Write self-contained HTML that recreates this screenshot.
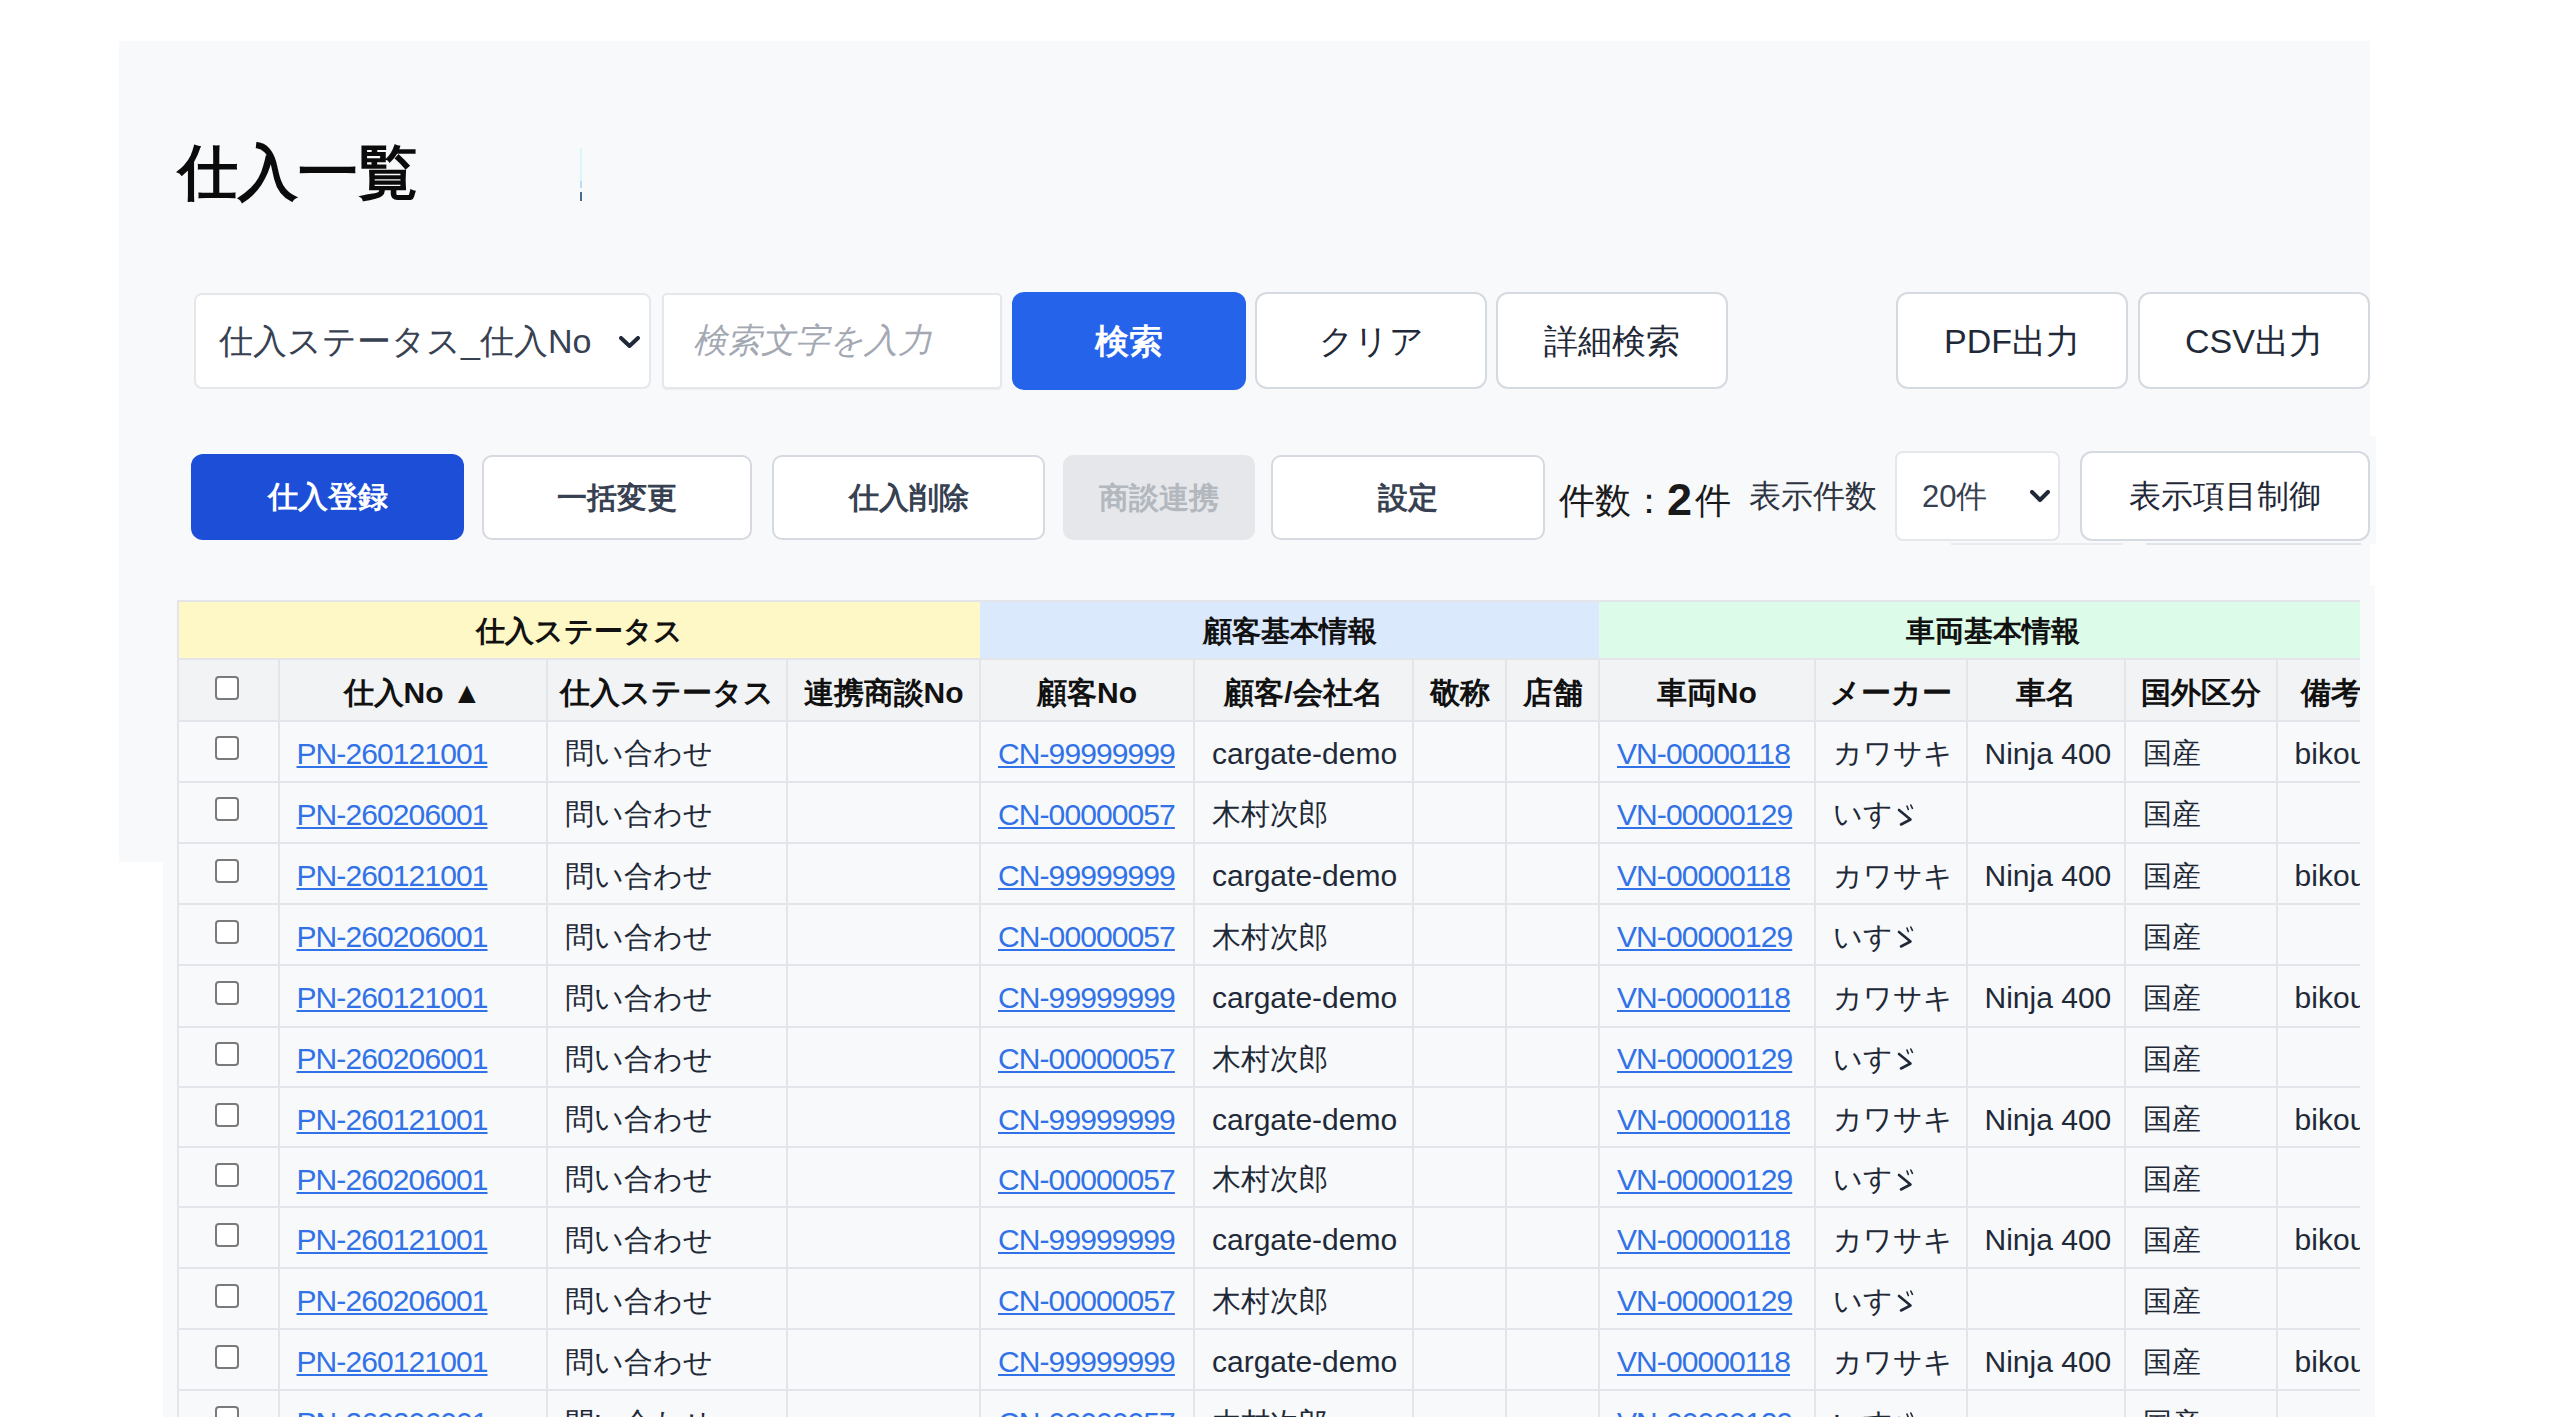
<!DOCTYPE html><html lang="ja"><head><meta charset="utf-8"><title>仕入一覧</title><style>

html,body{margin:0;padding:0;}
body{width:2560px;height:1417px;overflow:hidden;background:#ffffff;position:relative;font-family:'Liberation Sans',sans-serif;color:#1f2937;}
.a{position:absolute;}
.t{position:absolute;white-space:nowrap;line-height:1;}
.btn{position:absolute;box-sizing:border-box;background:#fff;border:2px solid #d8dce3;border-radius:10px;}
.lnk{color:#3172e8;text-decoration:underline;text-decoration-thickness:2px;text-underline-offset:2px;letter-spacing:-0.9px;}
.cb{position:absolute;box-sizing:border-box;width:24px;height:24px;border:2px solid #7a7a7a;border-radius:4px;background:#fff;}
.hl{position:absolute;height:2px;background:#e3e5ea;}
.vl{position:absolute;width:2px;background:#e3e5ea;}
.chev{position:absolute;}

</style></head><body>
<div class="a" style="left:119px;top:41px;width:2251px;height:821px;background:#f8f9fb"></div>
<div class="a" style="left:163px;top:862px;width:2212px;height:555px;background:#f8f9fb"></div>
<div class="a" style="left:2370px;top:436px;width:6px;height:108px;background:#f8f9fb"></div>
<div class="a" style="left:2370px;top:585px;width:5px;height:277px;background:#f8f9fb"></div>
<div class="t" style="left:178px;top:143px;font-size:60px;font-weight:bold;color:#0b0b0b">仕入一覧</div>
<div class="a" style="left:580px;top:148px;width:2px;height:38px;background:#d9f6fa"></div>
<div class="a" style="left:580px;top:181px;width:2px;height:7px;background:#b9dcfb"></div>
<div class="a" style="left:580px;top:192px;width:2px;height:9px;background:#4a6a8a"></div>
<div class="btn" style="left:194px;top:293px;width:457px;height:96px;border:2px solid #e5e7eb;border-radius:8px"></div>
<div class="t" style="left:219px;top:324px;font-size:34px;color:#374151">仕入ステータス_仕入No</div>
<svg class="chev" style="left:619px;top:336px" width="21" height="12" viewBox="0 0 21 12"><polyline points="2.0,2.0 10.5,10.0 19.0,2.0" fill="none" stroke="#1f2937" stroke-width="4" stroke-linecap="round" stroke-linejoin="round"/></svg>
<div class="btn" style="left:662px;top:293px;width:340px;height:96px;border:2px solid #e5e7eb;border-radius:5px;box-shadow:0 1px 2px rgba(0,0,0,0.06)"></div>
<div class="t" style="left:693px;top:323px;font-size:34px;color:#a3a8b3;font-style:italic">検索文字を入力</div>
<div class="btn" style="left:1012px;top:292px;width:234px;height:98px;background:#2563eb;border:none;border-radius:12px;"><div style="position:absolute;left:0;right:0;top:0;bottom:0;display:flex;align-items:center;justify-content:center;font-size:34px;font-weight:bold;color:#ffffff;white-space:nowrap;line-height:1">検索</div></div>
<div class="btn" style="left:1255px;top:292px;width:232px;height:97px;background:#fff;border:2px solid #d5d9e0;border-radius:12px;"><div style="position:absolute;left:0;right:0;top:0;bottom:0;display:flex;align-items:center;justify-content:center;font-size:34px;font-weight:normal;color:#1f2937;white-space:nowrap;line-height:1">クリア</div></div>
<div class="btn" style="left:1496px;top:292px;width:232px;height:97px;background:#fff;border:2px solid #d5d9e0;border-radius:12px;"><div style="position:absolute;left:0;right:0;top:0;bottom:0;display:flex;align-items:center;justify-content:center;font-size:34px;font-weight:normal;color:#1f2937;white-space:nowrap;line-height:1">詳細検索</div></div>
<div class="btn" style="left:1896px;top:292px;width:232px;height:97px;background:#fff;border:2px solid #d5d9e0;border-radius:12px;"><div style="position:absolute;left:0;right:0;top:0;bottom:0;display:flex;align-items:center;justify-content:center;font-size:34px;font-weight:normal;color:#1f2937;white-space:nowrap;line-height:1">PDF出力</div></div>
<div class="btn" style="left:2138px;top:292px;width:232px;height:97px;background:#fff;border:2px solid #d5d9e0;border-radius:12px;"><div style="position:absolute;left:0;right:0;top:0;bottom:0;display:flex;align-items:center;justify-content:center;font-size:34px;font-weight:normal;color:#1f2937;white-space:nowrap;line-height:1">CSV出力</div></div>
<div class="btn" style="left:191px;top:454px;width:273px;height:86px;background:#1d4ed8;border:none;border-radius:12px;"><div style="position:absolute;left:0;right:0;top:0;bottom:0;display:flex;align-items:center;justify-content:center;font-size:30px;font-weight:bold;color:#ffffff;white-space:nowrap;line-height:1">仕入登録</div></div>
<div class="btn" style="left:482px;top:455px;width:270px;height:85px;background:#fff;border:2px solid #d6d9df;border-radius:10px;"><div style="position:absolute;left:0;right:0;top:0;bottom:0;display:flex;align-items:center;justify-content:center;font-size:30px;font-weight:bold;color:#374151;white-space:nowrap;line-height:1">一括変更</div></div>
<div class="btn" style="left:772px;top:455px;width:273px;height:85px;background:#fff;border:2px solid #d6d9df;border-radius:10px;"><div style="position:absolute;left:0;right:0;top:0;bottom:0;display:flex;align-items:center;justify-content:center;font-size:30px;font-weight:bold;color:#374151;white-space:nowrap;line-height:1">仕入削除</div></div>
<div class="btn" style="left:1063px;top:455px;width:192px;height:85px;background:#e5e7eb;border:none;border-radius:10px;"><div style="position:absolute;left:0;right:0;top:0;bottom:0;display:flex;align-items:center;justify-content:center;font-size:30px;font-weight:bold;color:#b3b7be;white-space:nowrap;line-height:1">商談連携</div></div>
<div class="btn" style="left:1271px;top:455px;width:274px;height:85px;background:#fff;border:2px solid #d6d9df;border-radius:10px;"><div style="position:absolute;left:0;right:0;top:0;bottom:0;display:flex;align-items:center;justify-content:center;font-size:30px;font-weight:bold;color:#374151;white-space:nowrap;line-height:1">設定</div></div>
<div class="t" style="left:1559px;top:477px;font-size:36px;color:#1a1a1a">件数：<span style="font-weight:bold;font-size:45px;vertical-align:-2px;margin-right:3px">2</span>件</div>
<div class="t" style="left:1749px;top:480px;font-size:32px;color:#2d3440">表示件数</div>
<div class="btn" style="left:1895px;top:451px;width:165px;height:90px;border:2px solid #e5e7eb;border-radius:8px"></div>
<div class="t" style="left:1922px;top:481px;font-size:31px;color:#374151">20件</div>
<svg class="chev" style="left:2030px;top:490px" width="20" height="12" viewBox="0 0 20 12"><polyline points="2.0,2.0 10.0,10.0 18.0,2.0" fill="none" stroke="#1f2937" stroke-width="4" stroke-linecap="round" stroke-linejoin="round"/></svg>
<div class="btn" style="left:2080px;top:451px;width:290px;height:90px;background:#fff;border:2px solid #d5d9e0;border-radius:12px;"><div style="position:absolute;left:0;right:0;top:0;bottom:0;display:flex;align-items:center;justify-content:center;font-size:32px;font-weight:normal;color:#1f2937;white-space:nowrap;line-height:1">表示項目制御</div></div>
<div class="a" style="left:1951px;top:543px;width:172px;height:2px;background:#e9ebef"></div>
<div class="a" style="left:2146px;top:543px;width:215px;height:2px;background:#e1e4e9"></div>
<div class="a" style="left:177px;top:0;width:2183px;height:1417px;overflow:hidden">
<div class="a" style="left:1px;top:601px;width:802px;height:58.299999999999955px;background:#fef7c6"></div>
<div class="a" style="left:803px;top:601px;width:619px;height:58.299999999999955px;background:#dbe9fd"></div>
<div class="a" style="left:1422px;top:601px;width:787px;height:58.299999999999955px;background:#ddfbe9"></div>
<div class="a" style="left:1px;top:659.3px;width:2208px;height:61.5px;background:#f2f3f5"></div>
<div class="a" style="left:1px;top:720.8px;width:2208px;height:696.2px;background:#f8f9fb"></div>
<div class="a" style="left:1px;top:602.5px;width:802px;height:58.299999999999955px;display:flex;align-items:center;justify-content:center;font-size:29px;font-weight:bold;color:#111111;white-space:nowrap;line-height:1">仕入ステータス</div>
<div class="a" style="left:803px;top:602.5px;width:619px;height:58.299999999999955px;display:flex;align-items:center;justify-content:center;font-size:29px;font-weight:bold;color:#111111;white-space:nowrap;line-height:1">顧客基本情報</div>
<div class="a" style="left:1422px;top:602.5px;width:787px;height:58.299999999999955px;display:flex;align-items:center;justify-content:center;font-size:29px;font-weight:bold;color:#111111;white-space:nowrap;line-height:1">車両基本情報</div>
<div class="cb" style="left:38px;top:676px"></div>
<div class="a" style="left:101.5px;top:661.8px;width:268.20000000000005px;height:61.5px;display:flex;align-items:center;justify-content:center;font-size:30px;font-weight:bold;color:#111111;white-space:nowrap;line-height:1">仕入No ▲</div>
<div class="a" style="left:369.70000000000005px;top:661.8px;width:240.29999999999995px;height:61.5px;display:flex;align-items:center;justify-content:center;font-size:30px;font-weight:bold;color:#111111;white-space:nowrap;line-height:1">仕入ステータス</div>
<div class="a" style="left:610px;top:661.8px;width:193px;height:61.5px;display:flex;align-items:center;justify-content:center;font-size:30px;font-weight:bold;color:#111111;white-space:nowrap;line-height:1">連携商談No</div>
<div class="a" style="left:803px;top:661.8px;width:214px;height:61.5px;display:flex;align-items:center;justify-content:center;font-size:30px;font-weight:bold;color:#111111;white-space:nowrap;line-height:1">顧客No</div>
<div class="a" style="left:1017px;top:661.8px;width:219px;height:61.5px;display:flex;align-items:center;justify-content:center;font-size:30px;font-weight:bold;color:#111111;white-space:nowrap;line-height:1">顧客/会社名</div>
<div class="a" style="left:1236px;top:661.8px;width:93px;height:61.5px;display:flex;align-items:center;justify-content:center;font-size:30px;font-weight:bold;color:#111111;white-space:nowrap;line-height:1">敬称</div>
<div class="a" style="left:1329px;top:661.8px;width:93px;height:61.5px;display:flex;align-items:center;justify-content:center;font-size:30px;font-weight:bold;color:#111111;white-space:nowrap;line-height:1">店舗</div>
<div class="a" style="left:1422px;top:661.8px;width:215.70000000000005px;height:61.5px;display:flex;align-items:center;justify-content:center;font-size:30px;font-weight:bold;color:#111111;white-space:nowrap;line-height:1">車両No</div>
<div class="a" style="left:1637.7px;top:661.8px;width:151.79999999999995px;height:61.5px;display:flex;align-items:center;justify-content:center;font-size:30px;font-weight:bold;color:#111111;white-space:nowrap;line-height:1">メーカー</div>
<div class="a" style="left:1789.5px;top:661.8px;width:158.0px;height:61.5px;display:flex;align-items:center;justify-content:center;font-size:30px;font-weight:bold;color:#111111;white-space:nowrap;line-height:1">車名</div>
<div class="a" style="left:1947.5px;top:661.8px;width:152.0999999999999px;height:61.5px;display:flex;align-items:center;justify-content:center;font-size:30px;font-weight:bold;color:#111111;white-space:nowrap;line-height:1">国外区分</div>
<div class="a" style="left:2099.6px;top:661.8px;width:109.40000000000009px;height:61.5px;display:flex;align-items:center;justify-content:center;font-size:30px;font-weight:bold;color:#111111;white-space:nowrap;line-height:1">備考</div>
<div class="cb" style="left:38px;top:736.3px"></div>
<div class="a lnk" style="left:119.5px;top:723.3px;height:60.90000000000009px;display:flex;align-items:center;font-size:30px;white-space:nowrap;line-height:1">PN-260121001</div>
<div class="a" style="left:387.70000000000005px;top:723.3px;height:60.90000000000009px;display:flex;align-items:center;font-size:29px;white-space:nowrap;line-height:1">問い合わせ</div>
<div class="a lnk" style="left:821px;top:723.3px;height:60.90000000000009px;display:flex;align-items:center;font-size:30px;white-space:nowrap;line-height:1">CN-99999999</div>
<div class="a" style="left:1035px;top:723.3px;height:60.90000000000009px;display:flex;align-items:center;font-size:30px;white-space:nowrap;line-height:1">cargate-demo</div>
<div class="a lnk" style="left:1440px;top:723.3px;height:60.90000000000009px;display:flex;align-items:center;font-size:30px;white-space:nowrap;line-height:1">VN-00000118</div>
<div class="a" style="left:1655.7px;top:723.3px;height:60.90000000000009px;display:flex;align-items:center;font-size:29px;white-space:nowrap;line-height:1">カワサキ</div>
<div class="a" style="left:1807.5px;top:723.3px;height:60.90000000000009px;display:flex;align-items:center;font-size:30px;white-space:nowrap;line-height:1">Ninja 400</div>
<div class="a" style="left:1965.5px;top:723.3px;height:60.90000000000009px;display:flex;align-items:center;font-size:29px;white-space:nowrap;line-height:1">国産</div>
<div class="a" style="left:2117.6px;top:723.3px;height:60.90000000000009px;display:flex;align-items:center;font-size:30px;white-space:nowrap;line-height:1">bikou</div>
<div class="cb" style="left:38px;top:797.2px"></div>
<div class="a lnk" style="left:119.5px;top:784.2px;height:61.299999999999955px;display:flex;align-items:center;font-size:30px;white-space:nowrap;line-height:1">PN-260206001</div>
<div class="a" style="left:387.70000000000005px;top:784.2px;height:61.299999999999955px;display:flex;align-items:center;font-size:29px;white-space:nowrap;line-height:1">問い合わせ</div>
<div class="a lnk" style="left:821px;top:784.2px;height:61.299999999999955px;display:flex;align-items:center;font-size:30px;white-space:nowrap;line-height:1">CN-00000057</div>
<div class="a" style="left:1035px;top:784.2px;height:61.299999999999955px;display:flex;align-items:center;font-size:29px;white-space:nowrap;line-height:1">木村次郎</div>
<div class="a lnk" style="left:1440px;top:784.2px;height:61.299999999999955px;display:flex;align-items:center;font-size:30px;white-space:nowrap;line-height:1">VN-00000129</div>
<div class="a" style="left:1655.7px;top:784.2px;height:61.299999999999955px;display:flex;align-items:center;font-size:29px;white-space:nowrap;line-height:1">いす<svg width="22" height="26" viewBox="0 0 22 26" style="vertical-align:-3px;margin-left:3px"><polyline points="3,8 14.5,17.5 5,22.5" fill="none" stroke="#1f2937" stroke-width="2.6" stroke-linecap="round" stroke-linejoin="round"/><line x1="11" y1="4" x2="12.3" y2="7.5" stroke="#1f2937" stroke-width="1.6" stroke-linecap="round"/><line x1="14.8" y1="3" x2="16.4" y2="6.3" stroke="#1f2937" stroke-width="1.6" stroke-linecap="round"/></svg></div>
<div class="a" style="left:1965.5px;top:784.2px;height:61.299999999999955px;display:flex;align-items:center;font-size:29px;white-space:nowrap;line-height:1">国産</div>
<div class="cb" style="left:38px;top:858.5px"></div>
<div class="a lnk" style="left:119.5px;top:845.5px;height:61px;display:flex;align-items:center;font-size:30px;white-space:nowrap;line-height:1">PN-260121001</div>
<div class="a" style="left:387.70000000000005px;top:845.5px;height:61px;display:flex;align-items:center;font-size:29px;white-space:nowrap;line-height:1">問い合わせ</div>
<div class="a lnk" style="left:821px;top:845.5px;height:61px;display:flex;align-items:center;font-size:30px;white-space:nowrap;line-height:1">CN-99999999</div>
<div class="a" style="left:1035px;top:845.5px;height:61px;display:flex;align-items:center;font-size:30px;white-space:nowrap;line-height:1">cargate-demo</div>
<div class="a lnk" style="left:1440px;top:845.5px;height:61px;display:flex;align-items:center;font-size:30px;white-space:nowrap;line-height:1">VN-00000118</div>
<div class="a" style="left:1655.7px;top:845.5px;height:61px;display:flex;align-items:center;font-size:29px;white-space:nowrap;line-height:1">カワサキ</div>
<div class="a" style="left:1807.5px;top:845.5px;height:61px;display:flex;align-items:center;font-size:30px;white-space:nowrap;line-height:1">Ninja 400</div>
<div class="a" style="left:1965.5px;top:845.5px;height:61px;display:flex;align-items:center;font-size:29px;white-space:nowrap;line-height:1">国産</div>
<div class="a" style="left:2117.6px;top:845.5px;height:61px;display:flex;align-items:center;font-size:30px;white-space:nowrap;line-height:1">bikou</div>
<div class="cb" style="left:38px;top:919.5px"></div>
<div class="a lnk" style="left:119.5px;top:906.5px;height:61px;display:flex;align-items:center;font-size:30px;white-space:nowrap;line-height:1">PN-260206001</div>
<div class="a" style="left:387.70000000000005px;top:906.5px;height:61px;display:flex;align-items:center;font-size:29px;white-space:nowrap;line-height:1">問い合わせ</div>
<div class="a lnk" style="left:821px;top:906.5px;height:61px;display:flex;align-items:center;font-size:30px;white-space:nowrap;line-height:1">CN-00000057</div>
<div class="a" style="left:1035px;top:906.5px;height:61px;display:flex;align-items:center;font-size:29px;white-space:nowrap;line-height:1">木村次郎</div>
<div class="a lnk" style="left:1440px;top:906.5px;height:61px;display:flex;align-items:center;font-size:30px;white-space:nowrap;line-height:1">VN-00000129</div>
<div class="a" style="left:1655.7px;top:906.5px;height:61px;display:flex;align-items:center;font-size:29px;white-space:nowrap;line-height:1">いす<svg width="22" height="26" viewBox="0 0 22 26" style="vertical-align:-3px;margin-left:3px"><polyline points="3,8 14.5,17.5 5,22.5" fill="none" stroke="#1f2937" stroke-width="2.6" stroke-linecap="round" stroke-linejoin="round"/><line x1="11" y1="4" x2="12.3" y2="7.5" stroke="#1f2937" stroke-width="1.6" stroke-linecap="round"/><line x1="14.8" y1="3" x2="16.4" y2="6.3" stroke="#1f2937" stroke-width="1.6" stroke-linecap="round"/></svg></div>
<div class="a" style="left:1965.5px;top:906.5px;height:61px;display:flex;align-items:center;font-size:29px;white-space:nowrap;line-height:1">国産</div>
<div class="cb" style="left:38px;top:980.5px"></div>
<div class="a lnk" style="left:119.5px;top:967.5px;height:61.5px;display:flex;align-items:center;font-size:30px;white-space:nowrap;line-height:1">PN-260121001</div>
<div class="a" style="left:387.70000000000005px;top:967.5px;height:61.5px;display:flex;align-items:center;font-size:29px;white-space:nowrap;line-height:1">問い合わせ</div>
<div class="a lnk" style="left:821px;top:967.5px;height:61.5px;display:flex;align-items:center;font-size:30px;white-space:nowrap;line-height:1">CN-99999999</div>
<div class="a" style="left:1035px;top:967.5px;height:61.5px;display:flex;align-items:center;font-size:30px;white-space:nowrap;line-height:1">cargate-demo</div>
<div class="a lnk" style="left:1440px;top:967.5px;height:61.5px;display:flex;align-items:center;font-size:30px;white-space:nowrap;line-height:1">VN-00000118</div>
<div class="a" style="left:1655.7px;top:967.5px;height:61.5px;display:flex;align-items:center;font-size:29px;white-space:nowrap;line-height:1">カワサキ</div>
<div class="a" style="left:1807.5px;top:967.5px;height:61.5px;display:flex;align-items:center;font-size:30px;white-space:nowrap;line-height:1">Ninja 400</div>
<div class="a" style="left:1965.5px;top:967.5px;height:61.5px;display:flex;align-items:center;font-size:29px;white-space:nowrap;line-height:1">国産</div>
<div class="a" style="left:2117.6px;top:967.5px;height:61.5px;display:flex;align-items:center;font-size:30px;white-space:nowrap;line-height:1">bikou</div>
<div class="cb" style="left:38px;top:1042.0px"></div>
<div class="a lnk" style="left:119.5px;top:1029.0px;height:60.799999999999955px;display:flex;align-items:center;font-size:30px;white-space:nowrap;line-height:1">PN-260206001</div>
<div class="a" style="left:387.70000000000005px;top:1029.0px;height:60.799999999999955px;display:flex;align-items:center;font-size:29px;white-space:nowrap;line-height:1">問い合わせ</div>
<div class="a lnk" style="left:821px;top:1029.0px;height:60.799999999999955px;display:flex;align-items:center;font-size:30px;white-space:nowrap;line-height:1">CN-00000057</div>
<div class="a" style="left:1035px;top:1029.0px;height:60.799999999999955px;display:flex;align-items:center;font-size:29px;white-space:nowrap;line-height:1">木村次郎</div>
<div class="a lnk" style="left:1440px;top:1029.0px;height:60.799999999999955px;display:flex;align-items:center;font-size:30px;white-space:nowrap;line-height:1">VN-00000129</div>
<div class="a" style="left:1655.7px;top:1029.0px;height:60.799999999999955px;display:flex;align-items:center;font-size:29px;white-space:nowrap;line-height:1">いす<svg width="22" height="26" viewBox="0 0 22 26" style="vertical-align:-3px;margin-left:3px"><polyline points="3,8 14.5,17.5 5,22.5" fill="none" stroke="#1f2937" stroke-width="2.6" stroke-linecap="round" stroke-linejoin="round"/><line x1="11" y1="4" x2="12.3" y2="7.5" stroke="#1f2937" stroke-width="1.6" stroke-linecap="round"/><line x1="14.8" y1="3" x2="16.4" y2="6.3" stroke="#1f2937" stroke-width="1.6" stroke-linecap="round"/></svg></div>
<div class="a" style="left:1965.5px;top:1029.0px;height:60.799999999999955px;display:flex;align-items:center;font-size:29px;white-space:nowrap;line-height:1">国産</div>
<div class="cb" style="left:38px;top:1102.8px"></div>
<div class="a lnk" style="left:119.5px;top:1089.8px;height:59.700000000000045px;display:flex;align-items:center;font-size:30px;white-space:nowrap;line-height:1">PN-260121001</div>
<div class="a" style="left:387.70000000000005px;top:1089.8px;height:59.700000000000045px;display:flex;align-items:center;font-size:29px;white-space:nowrap;line-height:1">問い合わせ</div>
<div class="a lnk" style="left:821px;top:1089.8px;height:59.700000000000045px;display:flex;align-items:center;font-size:30px;white-space:nowrap;line-height:1">CN-99999999</div>
<div class="a" style="left:1035px;top:1089.8px;height:59.700000000000045px;display:flex;align-items:center;font-size:30px;white-space:nowrap;line-height:1">cargate-demo</div>
<div class="a lnk" style="left:1440px;top:1089.8px;height:59.700000000000045px;display:flex;align-items:center;font-size:30px;white-space:nowrap;line-height:1">VN-00000118</div>
<div class="a" style="left:1655.7px;top:1089.8px;height:59.700000000000045px;display:flex;align-items:center;font-size:29px;white-space:nowrap;line-height:1">カワサキ</div>
<div class="a" style="left:1807.5px;top:1089.8px;height:59.700000000000045px;display:flex;align-items:center;font-size:30px;white-space:nowrap;line-height:1">Ninja 400</div>
<div class="a" style="left:1965.5px;top:1089.8px;height:59.700000000000045px;display:flex;align-items:center;font-size:29px;white-space:nowrap;line-height:1">国産</div>
<div class="a" style="left:2117.6px;top:1089.8px;height:59.700000000000045px;display:flex;align-items:center;font-size:30px;white-space:nowrap;line-height:1">bikou</div>
<div class="cb" style="left:38px;top:1162.5px"></div>
<div class="a lnk" style="left:119.5px;top:1149.5px;height:60px;display:flex;align-items:center;font-size:30px;white-space:nowrap;line-height:1">PN-260206001</div>
<div class="a" style="left:387.70000000000005px;top:1149.5px;height:60px;display:flex;align-items:center;font-size:29px;white-space:nowrap;line-height:1">問い合わせ</div>
<div class="a lnk" style="left:821px;top:1149.5px;height:60px;display:flex;align-items:center;font-size:30px;white-space:nowrap;line-height:1">CN-00000057</div>
<div class="a" style="left:1035px;top:1149.5px;height:60px;display:flex;align-items:center;font-size:29px;white-space:nowrap;line-height:1">木村次郎</div>
<div class="a lnk" style="left:1440px;top:1149.5px;height:60px;display:flex;align-items:center;font-size:30px;white-space:nowrap;line-height:1">VN-00000129</div>
<div class="a" style="left:1655.7px;top:1149.5px;height:60px;display:flex;align-items:center;font-size:29px;white-space:nowrap;line-height:1">いす<svg width="22" height="26" viewBox="0 0 22 26" style="vertical-align:-3px;margin-left:3px"><polyline points="3,8 14.5,17.5 5,22.5" fill="none" stroke="#1f2937" stroke-width="2.6" stroke-linecap="round" stroke-linejoin="round"/><line x1="11" y1="4" x2="12.3" y2="7.5" stroke="#1f2937" stroke-width="1.6" stroke-linecap="round"/><line x1="14.8" y1="3" x2="16.4" y2="6.3" stroke="#1f2937" stroke-width="1.6" stroke-linecap="round"/></svg></div>
<div class="a" style="left:1965.5px;top:1149.5px;height:60px;display:flex;align-items:center;font-size:29px;white-space:nowrap;line-height:1">国産</div>
<div class="cb" style="left:38px;top:1222.5px"></div>
<div class="a lnk" style="left:119.5px;top:1209.5px;height:61.200000000000045px;display:flex;align-items:center;font-size:30px;white-space:nowrap;line-height:1">PN-260121001</div>
<div class="a" style="left:387.70000000000005px;top:1209.5px;height:61.200000000000045px;display:flex;align-items:center;font-size:29px;white-space:nowrap;line-height:1">問い合わせ</div>
<div class="a lnk" style="left:821px;top:1209.5px;height:61.200000000000045px;display:flex;align-items:center;font-size:30px;white-space:nowrap;line-height:1">CN-99999999</div>
<div class="a" style="left:1035px;top:1209.5px;height:61.200000000000045px;display:flex;align-items:center;font-size:30px;white-space:nowrap;line-height:1">cargate-demo</div>
<div class="a lnk" style="left:1440px;top:1209.5px;height:61.200000000000045px;display:flex;align-items:center;font-size:30px;white-space:nowrap;line-height:1">VN-00000118</div>
<div class="a" style="left:1655.7px;top:1209.5px;height:61.200000000000045px;display:flex;align-items:center;font-size:29px;white-space:nowrap;line-height:1">カワサキ</div>
<div class="a" style="left:1807.5px;top:1209.5px;height:61.200000000000045px;display:flex;align-items:center;font-size:30px;white-space:nowrap;line-height:1">Ninja 400</div>
<div class="a" style="left:1965.5px;top:1209.5px;height:61.200000000000045px;display:flex;align-items:center;font-size:29px;white-space:nowrap;line-height:1">国産</div>
<div class="a" style="left:2117.6px;top:1209.5px;height:61.200000000000045px;display:flex;align-items:center;font-size:30px;white-space:nowrap;line-height:1">bikou</div>
<div class="cb" style="left:38px;top:1283.7px"></div>
<div class="a lnk" style="left:119.5px;top:1270.7px;height:60.799999999999955px;display:flex;align-items:center;font-size:30px;white-space:nowrap;line-height:1">PN-260206001</div>
<div class="a" style="left:387.70000000000005px;top:1270.7px;height:60.799999999999955px;display:flex;align-items:center;font-size:29px;white-space:nowrap;line-height:1">問い合わせ</div>
<div class="a lnk" style="left:821px;top:1270.7px;height:60.799999999999955px;display:flex;align-items:center;font-size:30px;white-space:nowrap;line-height:1">CN-00000057</div>
<div class="a" style="left:1035px;top:1270.7px;height:60.799999999999955px;display:flex;align-items:center;font-size:29px;white-space:nowrap;line-height:1">木村次郎</div>
<div class="a lnk" style="left:1440px;top:1270.7px;height:60.799999999999955px;display:flex;align-items:center;font-size:30px;white-space:nowrap;line-height:1">VN-00000129</div>
<div class="a" style="left:1655.7px;top:1270.7px;height:60.799999999999955px;display:flex;align-items:center;font-size:29px;white-space:nowrap;line-height:1">いす<svg width="22" height="26" viewBox="0 0 22 26" style="vertical-align:-3px;margin-left:3px"><polyline points="3,8 14.5,17.5 5,22.5" fill="none" stroke="#1f2937" stroke-width="2.6" stroke-linecap="round" stroke-linejoin="round"/><line x1="11" y1="4" x2="12.3" y2="7.5" stroke="#1f2937" stroke-width="1.6" stroke-linecap="round"/><line x1="14.8" y1="3" x2="16.4" y2="6.3" stroke="#1f2937" stroke-width="1.6" stroke-linecap="round"/></svg></div>
<div class="a" style="left:1965.5px;top:1270.7px;height:60.799999999999955px;display:flex;align-items:center;font-size:29px;white-space:nowrap;line-height:1">国産</div>
<div class="cb" style="left:38px;top:1344.5px"></div>
<div class="a lnk" style="left:119.5px;top:1331.5px;height:61px;display:flex;align-items:center;font-size:30px;white-space:nowrap;line-height:1">PN-260121001</div>
<div class="a" style="left:387.70000000000005px;top:1331.5px;height:61px;display:flex;align-items:center;font-size:29px;white-space:nowrap;line-height:1">問い合わせ</div>
<div class="a lnk" style="left:821px;top:1331.5px;height:61px;display:flex;align-items:center;font-size:30px;white-space:nowrap;line-height:1">CN-99999999</div>
<div class="a" style="left:1035px;top:1331.5px;height:61px;display:flex;align-items:center;font-size:30px;white-space:nowrap;line-height:1">cargate-demo</div>
<div class="a lnk" style="left:1440px;top:1331.5px;height:61px;display:flex;align-items:center;font-size:30px;white-space:nowrap;line-height:1">VN-00000118</div>
<div class="a" style="left:1655.7px;top:1331.5px;height:61px;display:flex;align-items:center;font-size:29px;white-space:nowrap;line-height:1">カワサキ</div>
<div class="a" style="left:1807.5px;top:1331.5px;height:61px;display:flex;align-items:center;font-size:30px;white-space:nowrap;line-height:1">Ninja 400</div>
<div class="a" style="left:1965.5px;top:1331.5px;height:61px;display:flex;align-items:center;font-size:29px;white-space:nowrap;line-height:1">国産</div>
<div class="a" style="left:2117.6px;top:1331.5px;height:61px;display:flex;align-items:center;font-size:30px;white-space:nowrap;line-height:1">bikou</div>
<div class="cb" style="left:38px;top:1405.5px"></div>
<div class="a lnk" style="left:119.5px;top:1392.5px;height:61px;display:flex;align-items:center;font-size:30px;white-space:nowrap;line-height:1">PN-260206001</div>
<div class="a" style="left:387.70000000000005px;top:1392.5px;height:61px;display:flex;align-items:center;font-size:29px;white-space:nowrap;line-height:1">問い合わせ</div>
<div class="a lnk" style="left:821px;top:1392.5px;height:61px;display:flex;align-items:center;font-size:30px;white-space:nowrap;line-height:1">CN-00000057</div>
<div class="a" style="left:1035px;top:1392.5px;height:61px;display:flex;align-items:center;font-size:29px;white-space:nowrap;line-height:1">木村次郎</div>
<div class="a lnk" style="left:1440px;top:1392.5px;height:61px;display:flex;align-items:center;font-size:30px;white-space:nowrap;line-height:1">VN-00000129</div>
<div class="a" style="left:1655.7px;top:1392.5px;height:61px;display:flex;align-items:center;font-size:29px;white-space:nowrap;line-height:1">いす<svg width="22" height="26" viewBox="0 0 22 26" style="vertical-align:-3px;margin-left:3px"><polyline points="3,8 14.5,17.5 5,22.5" fill="none" stroke="#1f2937" stroke-width="2.6" stroke-linecap="round" stroke-linejoin="round"/><line x1="11" y1="4" x2="12.3" y2="7.5" stroke="#1f2937" stroke-width="1.6" stroke-linecap="round"/><line x1="14.8" y1="3" x2="16.4" y2="6.3" stroke="#1f2937" stroke-width="1.6" stroke-linecap="round"/></svg></div>
<div class="a" style="left:1965.5px;top:1392.5px;height:61px;display:flex;align-items:center;font-size:29px;white-space:nowrap;line-height:1">国産</div>
<div class="vl" style="left:0px;top:601px;height:816px"></div>
<div class="vl" style="left:100.5px;top:659.3px;height:757.7px"></div>
<div class="vl" style="left:368.70000000000005px;top:659.3px;height:757.7px"></div>
<div class="vl" style="left:609px;top:659.3px;height:757.7px"></div>
<div class="vl" style="left:802px;top:659.3px;height:757.7px"></div>
<div class="vl" style="left:1016px;top:659.3px;height:757.7px"></div>
<div class="vl" style="left:1235px;top:659.3px;height:757.7px"></div>
<div class="vl" style="left:1328px;top:659.3px;height:757.7px"></div>
<div class="vl" style="left:1421px;top:659.3px;height:757.7px"></div>
<div class="vl" style="left:1636.7px;top:659.3px;height:757.7px"></div>
<div class="vl" style="left:1788.5px;top:659.3px;height:757.7px"></div>
<div class="vl" style="left:1946.5px;top:659.3px;height:757.7px"></div>
<div class="vl" style="left:2098.6px;top:659.3px;height:757.7px"></div>
<div class="hl" style="left:0px;top:600px;width:2208px"></div>
<div class="hl" style="left:0px;top:658.3px;width:2208px"></div>
<div class="hl" style="left:0px;top:719.8px;width:2208px"></div>
<div class="hl" style="left:0px;top:780.7px;width:2208px"></div>
<div class="hl" style="left:0px;top:842px;width:2208px"></div>
<div class="hl" style="left:0px;top:903px;width:2208px"></div>
<div class="hl" style="left:0px;top:964px;width:2208px"></div>
<div class="hl" style="left:0px;top:1025.5px;width:2208px"></div>
<div class="hl" style="left:0px;top:1086.3px;width:2208px"></div>
<div class="hl" style="left:0px;top:1146px;width:2208px"></div>
<div class="hl" style="left:0px;top:1206px;width:2208px"></div>
<div class="hl" style="left:0px;top:1267.2px;width:2208px"></div>
<div class="hl" style="left:0px;top:1328px;width:2208px"></div>
<div class="hl" style="left:0px;top:1389px;width:2208px"></div>
<div class="hl" style="left:0px;top:1450px;width:2208px"></div>
</div>
</body></html>
